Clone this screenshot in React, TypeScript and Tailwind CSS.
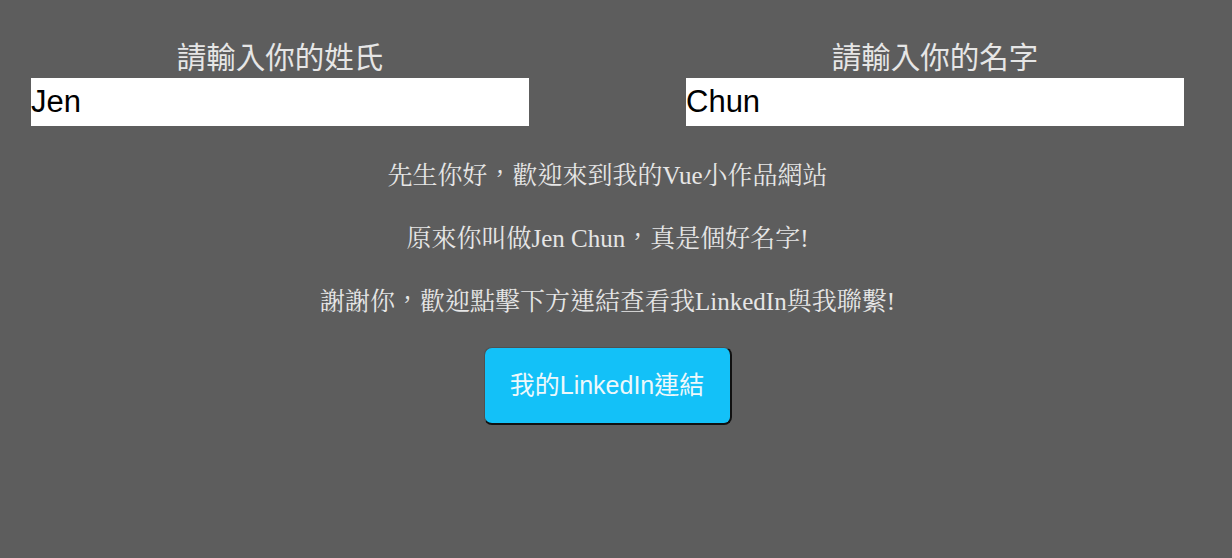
import React from "react";

const App: React.FC = () => {
  const [lastName, setLastName] = React.useState("Jen");
  const [firstName, setFirstName] = React.useState("Chun");

  const sans = "font-['Liberation_Sans','Noto_Sans_CJK_TC',sans-serif]";
  const serif = "font-['Liberation_Serif','Noto_Serif_CJK_TC','Noto_Sans_CJK_TC',serif]";

  return (
    <div className="w-full h-[558px] bg-[#5d5d5d] text-[#e6e6e6] pt-[37px] pr-[17px]">
      <div className="flex pl-[31px] gap-[157px]">
        <div className="flex flex-col items-center w-[498px]">
          <label className={`${sans} text-[29.5px] leading-[41px] h-[41px]`}>請輸入你的姓氏</label>
          <input
            value={lastName}
            onChange={(e) => setLastName(e.target.value)}
            className={`${sans} w-full h-[48px] bg-white text-black text-[31px] px-0 outline-none`}
          />
        </div>
        <div className="flex flex-col items-center w-[498px]">
          <label className={`${sans} text-[29.5px] leading-[41px] h-[41px]`}>請輸入你的名字</label>
          <input
            value={firstName}
            onChange={(e) => setFirstName(e.target.value)}
            className={`${sans} w-full h-[48px] bg-white text-black text-[31px] px-0 outline-none`}
          />
        </div>
      </div>

      <div className="flex flex-col items-center gap-[31px] mt-[34px]">
        <p className={`${serif} text-[25px] leading-[32px] h-[32px]`}>先生你好，歡迎來到我的Vue小作品網站</p>
        <p className={`${serif} text-[25px] leading-[32px] h-[32px]`}>
          原來你叫做{lastName} {firstName}，真是個好名字!
        </p>
        <p className={`${serif} text-[25px] leading-[32px] h-[32px]`}>謝謝你，歡迎點擊下方連結查看我LinkedIn與我聯繫!</p>
        <button
          className={`${sans} -mt-[2px] w-[248px] h-[78px] rounded-[8px] bg-[#13c1f8] text-[25px] text-[#eef8fb] border-t border-l border-r-2 border-b-2 border-t-[#505050] border-l-[#505050] border-r-[#111] border-b-[#111]`}
        >
          我的LinkedIn連結
        </button>
      </div>
    </div>
  );
};

export default App;
